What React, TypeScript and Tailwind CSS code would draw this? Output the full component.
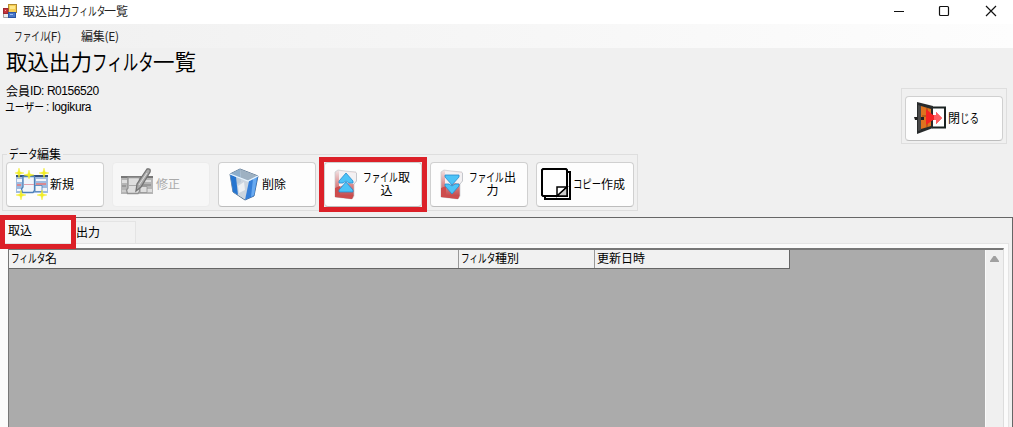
import type { ReactNode } from 'react';
import clsx from 'clsx';

/** Proportional kana run, squeezed into the width given by its class */
function Kana({ className, scale = 'scale-x-[.72]', children }: { className: string; scale?: string; children: ReactNode }) {
  return (
    <span className={clsx('inline-block whitespace-nowrap', className)}>
      <span className={clsx('inline-block origin-left', scale)}>{children}</span>
    </span>
  );
}

/** Small windows form logo in the title bar */
function AppIcon() {
  return (
    <svg width="14" height="15" viewBox="0 0 14 15" className="-mt-[2px]">
      <path d="M.5 13.500V4.500h5v9z" fill="#eee" stroke="#a5a5a5" />
      <rect x="5.500" y=".5" width="8" height="8" fill="#f6cf54" stroke="#b28b2f" />
      <path d="M7 2h5v3H7z" fill="#ffe88a" />
      <rect x=".5" y="4.500" width="4.500" height="5" fill="#c7333c" stroke="#9b2a31" />
      <path d="M2 6h1v1H2z" fill="#f4a3a3" />
      <rect x="5.500" y="8.500" width="7" height="5" fill="#4776c8" stroke="#2d55a0" />
      <path d="M7 10h3v1H7z" fill="#9fbdf0" />
    </svg>
  );
}

/** Overlapping form windows shared by the new and edit icons */
function Windows({ gray }: { gray?: boolean }) {
  const bar = gray ? '#777' : '#33507c';
  const side = gray ? '#b5b5b5' : '#9fbbe0';
  const front = gray ? '#dedede' : '#f1f5fb';
  const edge = gray ? '#929292' : '#4d80b9';
  return (
    <>
      <path d="M0 8h32v18H0z" fill={side} />
      <path d="M0 8h32v2H0z" fill={bar} />
      <path d="M1 12h5v3H1zM20 12h10v2H20zM20 21h11v3H20z" fill={front} />
      <path d="M1 17h4v2H1zM20 16h10v2H20z" fill={gray ? '#999' : '#d88991'} />
      <path d="M1 22h6v2H1z" fill={gray ? '#ccc' : '#f7fafe'} />
      <path d="M19 18.500h7v6h-7z" fill={front} stroke={edge} strokeWidth=".8" />
      <path d="M7 9.500H18.500V23.500L17 25.500H6.500L5.500 22 7 20z" fill={front} stroke={edge} strokeWidth="1.300" />
      <path d="M8 17.500h10" stroke={gray ? '#aaa' : '#e0a0ad'} />
    </>
  );
}

function NewIcon() {
  return (
    <svg width="34" height="34" viewBox="0 0 34 34" className="shrink-0">
      <g transform="translate(1 -1)">
        <Windows />
      </g>
      <path
        d="M4 0l1 4 4 1-4 1-1 4-1-4-3-1 3-1zM14 2l1 4 4 1-4 1-1 3-1-3-4-1 4-1zM29 0l1 4 4 1-4 1-1 4-1-4-4-1 4-1zM6 22l1 4 4 1-4 1-1 4-1-4-4-1 4-1zM27 22l1 4 4 1-4 1-1 4-1-4-4-1 4-1z"
        fill="#f2ed24"
        stroke="#f2ed24"
        strokeWidth=".4"
      />
    </svg>
  );
}

function EditIcon() {
  return (
    <svg width="34" height="34" viewBox="0 0 34 34" className="shrink-0">
      <Windows gray />
      <path d="M26 1q4-1 3 3l-9 15-5 4 1-7z" fill="#aaa" stroke="#737373" strokeWidth="1.300" />
      <path d="M26 5l-8 12" stroke="#ddd" />
    </svg>
  );
}

function TrashIcon() {
  return (
    <svg width="32" height="33" viewBox="0 0 32 33" className="shrink-0">
      <path d="M2 6L12 1 30 8 26 28 17 32 5 24z" fill="#cddbe8" stroke="#536e8b" />
      <path d="M2 6l10-5 1 13-7 4z" fill="#8daecb" />
      <path d="M12 1l18 7-9 5-8-2z" fill="#9eb1c2" />
      <path d="M2 6l18 7-2 19L5 24z" fill="#cbd3dc" fillOpacity=".75" />
      <path d="M2 6l6 3 2 18-5-3z" fill="#2675cf" />
      <path d="M21 13l9-5-4 20-9 4z" fill="#367fd8" />
      <path d="M25 11l4-2-3 18-3 2z" fill="#69aaf0" />
      <path d="M10 18l6-4 1 8-6 3z" fill="#edf0f3" />
      <path d="M2 6l18 7 10-5" fill="none" stroke="#e6f4ff" strokeWidth="1.300" />
    </svg>
  );
}

/** Red folder with double arrows, pointing up for import and down for export */
function FolderIcon({ down }: { down?: boolean }) {
  return (
    <svg width="24" height="31" viewBox="0 0 24 31" className="shrink-0">
      <defs>
        <linearGradient id="folder" x1="0" y1="0" x2="0" y2="1">
          <stop offset="0" stopColor="#f1e5e6" />
          <stop offset=".4" stopColor="#e29c9d" />
          <stop offset="1" stopColor="#bd3a3c" />
        </linearGradient>
      </defs>
      <path d="M1 3l3-2 7 1 11 1v8l-2 3v13l-2 3-17-2z" fill="url(#folder)" stroke="#c5c8cd" strokeWidth=".7" />
      <path d="M5 2l18 2v8l-3 3-5-1-10 4z" fill="#f3f1f3" />
      <path d="M22.500 4v8l-2.500 3" fill="none" stroke="#b9bcc2" strokeWidth=".8" />
      <path d="M1 19l5-2v9l13 1-1 3-17-2z" fill="#cd4c4d" />
      <g transform={down ? 'matrix(1 0 0 -1 0 29)' : undefined} fill="#4dc3f7" stroke="#248bce" strokeWidth=".8">
        <path d="M12 4l7 8v2h-4l-3-2-3 2H5v-2z" />
        <path d="M12 13l7 8v2H5v-2z" />
      </g>
    </svg>
  );
}

function CopyIcon() {
  return (
    <svg width="31" height="33" viewBox="0 0 31 33" className="shrink-0">
      <path d="M27 4h2v27H4v-3" fill="none" stroke="#000" strokeWidth="2" />
      <path d="M2 1h23l1 1v26H2L1 27V2z" fill="#fff" stroke="#000" strokeWidth="2" />
      <path d="M16 28v-9h10z" fill="#fff" stroke="#000" strokeWidth="1.500" />
      <path d="M16 28l10-9v9z" fill="#ccc" stroke="#000" strokeWidth="1.500" />
    </svg>
  );
}

function DoorIcon() {
  return (
    <svg width="33" height="33" viewBox="0 0 33 33" className="shrink-0">
      <path d="M18 5.500h13v20H18" fill="#fff" stroke="#1b2322" strokeWidth="2" />
      <path d="M3 0l16 4v22L3 32z" fill="#282b2c" />
      <path d="M7 4l10 3v17L7 27z" fill="#df731f" />
      <path d="M4 3l3 1v24l-3 1z" fill="#484848" />
      <path d="M8 14h10M13 6v19" stroke="#8e4815" />
      <path d="M0 15h3l1 1-1 2H1zM7 15h3v3H7z" fill="#202020" />
      <path d="M12 7l7 6h3v-3l6 6-6 6v-4h-3l-7 5z" fill="#f52222" />
      <path d="M20 13h2v-3l6 6-6 6v-4h-2z" fill="#ff5e61" />
    </svg>
  );
}

interface ToolButtonProps {
  icon: ReactNode;
  children: ReactNode;
  disabled?: boolean;
  className?: string;
}

function ToolButton({ icon, children, disabled, className }: ToolButtonProps) {
  return (
    <button
      disabled={disabled}
      className={clsx(
        'flex h-[45px] w-[98px] shrink-0 items-center rounded-[4px] border text-left leading-[12px]',
        disabled ? 'border-[#ececec] bg-[#f7f7f7] text-[#aaa]' : 'border-[#d0d0d0] border-b-[#bdbdbd] bg-[#fdfdfd]',
        className,
      )}
    >
      {icon}
      {children}
    </button>
  );
}

/** Two-line caption of the file import and export buttons */
function FileLabel({ first, second }: { first: string; second: string }) {
  return (
    <span className="mb-[2px] ml-[5px] flex w-[47px] flex-col items-center">
      <span className="flex h-[13px]">
        <Kana className="w-[35px]">ファイル</Kana>
        {first}
      </span>
      <span className="h-[12px]">{second}</span>
    </span>
  );
}

function TitleBar() {
  return (
    <header className="flex h-6 shrink-0 items-center bg-white pl-[3px]">
      <AppIcon />
      <h1 className="mb-[3px] ml-[6px] flex text-[12px] leading-4 whitespace-nowrap text-[#222]">
        取込出力<Kana className="w-[33px]">フィルタ</Kana>一覧
      </h1>
      <svg
        width="104"
        height="12"
        viewBox="0 0 104 12"
        className="mr-[16px] mb-[2px] ml-auto"
        fill="none"
        stroke="#111"
        strokeWidth="1.200"
      >
        <path d="M1 6.500h10M93 1l10 10M103 1L93 11" />
        <rect x="46.500" y="1.500" width="9" height="9" rx="1" />
      </svg>
    </header>
  );
}

function MenuBar() {
  return (
    <nav className="flex h-6 shrink-0 items-center bg-linear-to-r from-[#f0f0f0] to-[#fdfdfd] pb-px pl-[14px] text-[12px] whitespace-nowrap text-[#222]">
      <span className="flex w-[67px]">
        <Kana className="w-[33px]">ファイル</Kana>
        <span className="tracking-[-.2px]">(F)</span>
      </span>
      <span className="tracking-[-.3px]">編集(E)</span>
    </nav>
  );
}

function Toolbar() {
  return (
    <fieldset className="relative ml-[2px] flex h-[57px] w-[636px] gap-2 border border-[#dedede] pt-[7px] pl-[3px]">
      <span className="absolute -top-[9px] left-[4px] flex bg-[#f0f0f0] px-[2px] leading-4">
        <Kana className="w-[28px]" scale="scale-x-[.79]">データ</Kana>編集
      </span>
      <ToolButton icon={<NewIcon />} className="pl-[8px]">
        <span className="mb-[2px] ml-[1px]">新規</span>
      </ToolButton>
      <ToolButton disabled icon={<EditIcon />} className="pl-[8px]">
        <span className="mb-[2px] ml-[1px]">修正</span>
      </ToolButton>
      <ToolButton icon={<TrashIcon />} className="pl-[9px]">
        <span className="mb-[2px] ml-[2px]">削除</span>
      </ToolButton>
      <div className="relative">
        <ToolButton icon={<FolderIcon />} className="pl-[9px]">
          <FileLabel first="取" second="込" />
        </ToolButton>
        <div className="absolute -top-[5px] -left-[5px] h-[55px] w-[108px] border-[5px] border-[#dc2028]" />
      </div>
      <ToolButton icon={<FolderIcon down />} className="pl-[9px]">
        <FileLabel first="出" second="力" />
      </ToolButton>
      <ToolButton icon={<CopyIcon />} className="pl-[4px]">
        <span className="mb-[2px] ml-[1px] flex">
          <Kana className="w-[28px]" scale="scale-x-[.78]">コピー</Kana>作成
        </span>
      </ToolButton>
    </fieldset>
  );
}

function FilterGrid() {
  return (
    <div className="ml-[8px] flex h-[179px] w-[996px] border-t-2 border-r border-l border-t-[#777] border-r-[#ddd] border-l-[#777] bg-[#ababab]">
      <div className="flex h-[19px] w-[781px] border-r border-b border-[#666] bg-[#f1f1f1] leading-[15px]">
        <div className="w-[450px] border-r border-[#999] pl-[2px]">
          <Kana className="w-[34px]">フィルタ</Kana>名
        </div>
        <div className="w-[136px] border-r border-[#999] pl-[2px]">
          <Kana className="w-[34px]">フィルタ</Kana>種別
        </div>
        <div className="pl-[2px]">更新日時</div>
      </div>
      <div className="ml-auto flex w-[18px] justify-center border-l border-[#fafafa] bg-[#f0f0f0] pt-[6px]">
        <svg width="9" height="7" viewBox="0 0 9 7">
          <path d="M3.500 0h2L9 5v1H0V5z" fill="#a0a0a0" />
        </svg>
      </div>
    </div>
  );
}

export default function App() {
  return (
    <div className="flex h-[427px] w-[1013px] flex-col overflow-hidden bg-[#f0f0f0] font-['Noto_Sans_CJK_JP',sans-serif] text-[12px] text-black">
      <TitleBar />
      <MenuBar />
      <div className="flex h-[105px] shrink-0 justify-between">
        <div className="pl-[6px]">
          <h2 className="flex h-[28px] text-[21.500px] leading-[25px] whitespace-nowrap">
            取込出力<Kana className="w-[61px]">フィルタ</Kana>一覧
          </h2>
          <p className="mt-[7px] flex h-[16px] leading-4">
            会員
            <span className="font-['Liberation_Sans',sans-serif] tracking-[-.45px]">ID: R0156520</span>
          </p>
          <p className="-ml-px flex leading-4">
            <Kana className="w-[39px]" scale="scale-x-[.82]">ユーザー</Kana>
            <span className="ml-[2px] font-['Liberation_Sans',sans-serif] tracking-[-.35px]">: logikura</span>
          </p>
        </div>
        <div className="mt-[40px] mr-[6px] h-[56px] w-[106px] border border-[#dedede] pt-[7px] pl-[3px]">
          <ToolButton icon={<DoorIcon />} className="pl-[8px]">
            <span className="mb-[2px] ml-[1px] flex">
              閉<Kana className="w-[20px]" scale="scale-x-[.8]">じる</Kana>
            </span>
          </ToolButton>
        </div>
      </div>
      <div className="mb-[6px] pt-px">
        <Toolbar />
      </div>
      <main className="relative flex-1 border-t border-r border-[#666]">
        <div className="flex h-[25px] items-end leading-4">
          <div className="relative h-[25px] w-[76px] bg-[#fafafa] pt-[4px] pl-[8px]">
            取込
            <div className="absolute -top-[3px] left-0 h-[34px] w-[76px] border-[5px] border-[#dc2028]" />
          </div>
          <div className="h-[22px] w-[60px] border-t border-r border-[#e4e4e4] bg-[#f2f2f2] pt-[2px]">出力</div>
        </div>
        <div className="mr-[3px] border-t border-r border-[#e4e4e4] bg-[#fbfbfb] pt-[4px]">
          <FilterGrid />
        </div>
      </main>
    </div>
  );
}
